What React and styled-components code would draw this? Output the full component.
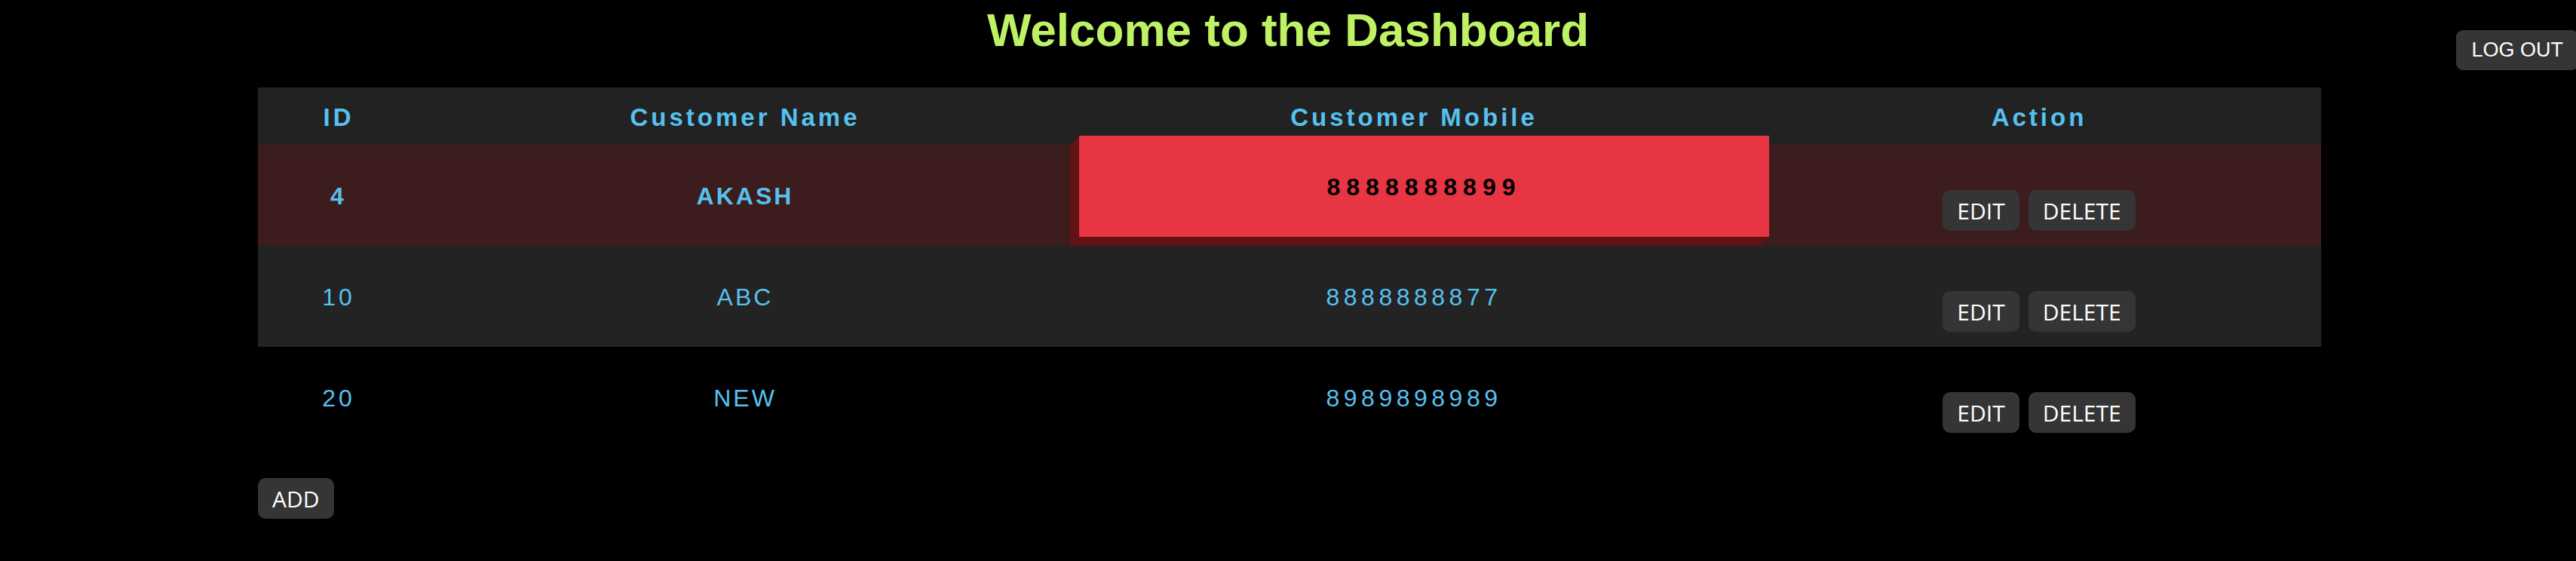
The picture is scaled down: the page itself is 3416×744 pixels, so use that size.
import React from "react";
import styled, { createGlobalStyle, css } from "styled-components";

const GlobalStyle = createGlobalStyle`
    html, body {
        margin: 0;
        background: #000;
        font-family: "Liberation Sans", Arial, sans-serif;
    }
`;

const columns = "214px 864px 910px 748px";

const StyledPage = styled.div`
    width: 3416px;
    min-height: 744px;
`;

const TopBar = styled.header`
    display: grid;
    grid-template-columns: 1fr auto 1fr;
    align-items: start;
    height: 116px;
`;

const Title = styled.h1`
    grid-column: 2;
    margin: 9px 0 0;
    font-size: 62px;
    line-height: 1;
    font-weight: 700;
    color: #bef264;
    text-align: center;
    white-space: nowrap;
`;

const LogoutButton = styled.button`
    grid-column: 3;
    justify-self: end;
    margin: 40px -3px 0 0;
    height: 53px;
    padding: 0 20px;
    border: none;
    border-radius: 9px;
    background: #353535;
    color: #fff;
    font-family: "Liberation Sans", Arial, sans-serif;
    font-size: 27px;
`;

const Table = styled.div`
    width: 2736px;
    margin-left: 342px;
`;

const Row = styled.div`
    display: grid;
    grid-template-columns: ${columns};
    height: ${(p) => (p.$head ? 76 : 134)}px;
    background: ${(p) => p.$bg || "transparent"};
`;

const Cell = styled.div`
    display: flex;
    align-items: center;
    justify-content: center;
    padding-top: 3px;
    color: #56c1ef;
    font-size: ${(p) => (p.$head ? 33 : 32)}px;
    font-weight: ${(p) => (p.$bold ? 700 : 400)};
    letter-spacing: ${(p) => p.$ls ?? 3}px;
    white-space: nowrap;
`;

const ActionCell = styled.div`
    display: flex;
    align-items: center;
    justify-content: center;
    gap: 12px;
    padding-top: 40px;
`;

const HoverCell = styled.div`
    position: relative;
`;

const LiftedBox = styled.div`
    display: flex;
    align-items: center;
    justify-content: center;
    width: calc(100% + 5px);
    height: 100%;
    padding-top: 2px;
    box-sizing: border-box;
    transform: translate(11px, -12px);
    background: #e83543;
    color: #000;
    font-size: 32px;
    font-weight: 700;
    letter-spacing: 8px;
    box-shadow: ${Array.from({ length: 12 }, (_, i) => `-${i + 1}px ${i + 1}px 0 #611313`).join(", ")};
`;

const Button = styled.button`
    display: inline-flex;
    align-items: center;
    height: 54px;
    padding: 0 19px;
    border: none;
    border-radius: 10px;
    background: #353535;
    color: #fff;
    font-family: "Open Sans", "Noto Sans", sans-serif;
    font-size: 30px;
    ${(p) =>
        p.$add &&
        css`
            margin: 40px 0 0 342px;
        `}
`;

const customers = [
    { id: 4, name: "AKASH", mobile: "8888888899", active: true },
    { id: 10, name: "ABC", mobile: "8888888877", bg: "#232323" },
    { id: 20, name: "NEW", mobile: "8989898989" },
];

function App() {
    return (
        <StyledPage>
            <GlobalStyle />
            <TopBar>
                <Title>Welcome to the Dashboard</Title>
                <LogoutButton>LOG OUT</LogoutButton>
            </TopBar>

            <Table>
                <Row $head $bg="#222222">
                    <Cell $head $bold $ls={4}>ID</Cell>
                    <Cell $head $bold $ls={4}>Customer Name</Cell>
                    <Cell $head $bold $ls={4}>Customer Mobile</Cell>
                    <Cell $head $bold $ls={4}>Action</Cell>
                </Row>

                {customers.map((c) => (
                    <Row key={c.id} $bg={c.active ? "#3c1c1c" : c.bg}>
                        <Cell $bold={c.active} $ls={4}>{c.id}</Cell>
                        <Cell $bold={c.active} $ls={3}>{c.name}</Cell>
                        {c.active ? (
                            <HoverCell>
                                <LiftedBox>{c.mobile}</LiftedBox>
                            </HoverCell>
                        ) : (
                            <Cell $ls={5.5}>{c.mobile}</Cell>
                        )}
                        <ActionCell>
                            <Button>EDIT</Button>
                            <Button>DELETE</Button>
                        </ActionCell>
                    </Row>
                ))}
            </Table>

            <Button $add>ADD</Button>
        </StyledPage>
    );
}

export default App;
